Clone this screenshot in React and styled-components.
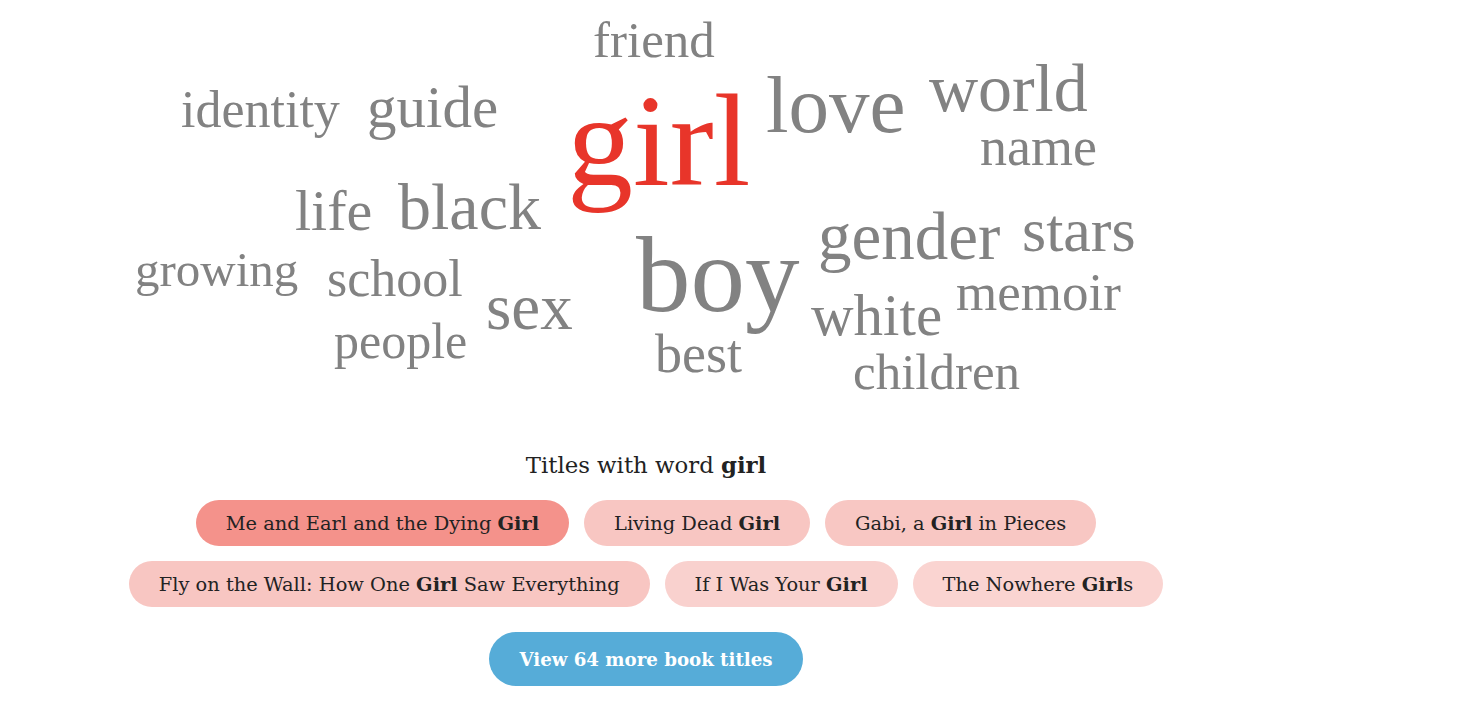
import React from "react";
import styled, { createGlobalStyle } from "styled-components";

const GlobalStyle = createGlobalStyle`
  html, body {
    margin: 0;
    padding: 0;
    background: #fff;
  }
  body {
    font-family: "DejaVu Serif", "Liberation Serif", serif;
    color: #222;
  }
`;

// word cloud: left edge, baseline, font size
const words = [
  { text: "friend", x: 593, y: 57, size: 51 },
  { text: "identity", x: 181, y: 127, size: 52 },
  { text: "guide", x: 367, y: 127, size: 59 },
  { text: "girl", x: 567, y: 185, size: 132, hot: true },
  { text: "love", x: 766, y: 133, size: 81 },
  { text: "world", x: 929, y: 111, size: 68 },
  { text: "name", x: 980, y: 165, size: 54 },
  { text: "life", x: 295, y: 230, size: 58 },
  { text: "black", x: 398, y: 229, size: 66 },
  { text: "growing", x: 135, y: 287, size: 49 },
  { text: "school", x: 327, y: 296, size: 52 },
  { text: "people", x: 334, y: 359, size: 50 },
  { text: "sex", x: 486, y: 329, size: 65 },
  { text: "boy", x: 636, y: 312, size: 109 },
  { text: "best", x: 655, y: 372, size: 54 },
  { text: "gender", x: 818, y: 259, size: 67 },
  { text: "stars", x: 1022, y: 251, size: 62 },
  { text: "white", x: 811, y: 335, size: 59 },
  { text: "memoir", x: 956, y: 311, size: 53 },
  { text: "children", x: 853, y: 389, size: 51 },
];

const titles = [
  { before: "Me and Earl and the Dying ", word: "Girl", after: "", tone: "#f4928b" },
  { before: "Living Dead ", word: "Girl", after: "", tone: "#f8c6c2" },
  { before: "Gabi, a ", word: "Girl", after: " in Pieces", tone: "#f8c7c3" },
  { before: "Fly on the Wall: How One ", word: "Girl", after: " Saw Everything", tone: "#f8c6c2" },
  { before: "If I Was Your ", word: "Girl", after: "", tone: "#f9d1ce" },
  { before: "The Nowhere ", word: "Girl", after: "s", tone: "#fad4d1" },
];

// line-height 0.75 keeps word boxes tight; baseline sits 0.7125em below the box top
const BASELINE = 0.7125;

function App() {
  return (
    <Page>
      <GlobalStyle />
      <Cloud>
        {words.map((w) => (
          <Word
            key={w.text}
            $hot={w.hot}
            style={{
              left: w.x,
              top: w.y - w.size * BASELINE,
              fontSize: w.size,
            }}
          >
            {w.text}
          </Word>
        ))}
      </Cloud>
      <Heading>
        Titles with word <b>girl</b>
      </Heading>
      <Chips>
        {titles.map((t, i) => (
          <Chip key={i} $tone={t.tone}>
            <span>
              {t.before}
              <b>{t.word}</b>
              {t.after}
            </span>
          </Chip>
        ))}
      </Chips>
      <MoreButton>View 64 more book titles</MoreButton>
    </Page>
  );
}

const Page = styled.div`
  width: 1292px;
  display: flex;
  flex-direction: column;
  align-items: center;
`;

const Cloud = styled.div`
  position: relative;
  width: 100%;
  height: 451px;
`;

const Word = styled.span`
  position: absolute;
  font-family: "Liberation Serif", serif;
  line-height: 0.75;
  white-space: nowrap;
  color: ${(p) => (p.$hot ? "#e8352a" : "#828282")};
`;

const Heading = styled.div`
  font-size: 22.8px;
  line-height: 28px;
  color: #222;
  b {
    font-weight: bold;
  }
`;

const Chips = styled.div`
  margin-top: 21px;
  max-width: 1200px;
  display: flex;
  flex-wrap: wrap;
  justify-content: center;
  gap: 15px 15px;
`;

const Chip = styled.div`
  height: 46px;
  padding: 0 30px;
  display: inline-flex;
  align-items: center;
  border-radius: 23px;
  background: ${(p) => p.$tone};
  font-size: 19.4px;
  color: #222;
  white-space: pre;
  b {
    font-weight: bold;
  }
`;

const MoreButton = styled.button`
  margin-top: 25px;
  height: 54px;
  padding: 0 30px;
  border: none;
  border-radius: 27px;
  background: #56acd8;
  color: #fff;
  font-family: "DejaVu Serif", serif;
  font-weight: bold;
  font-size: 18.2px;
  cursor: pointer;
`;

export default App;
